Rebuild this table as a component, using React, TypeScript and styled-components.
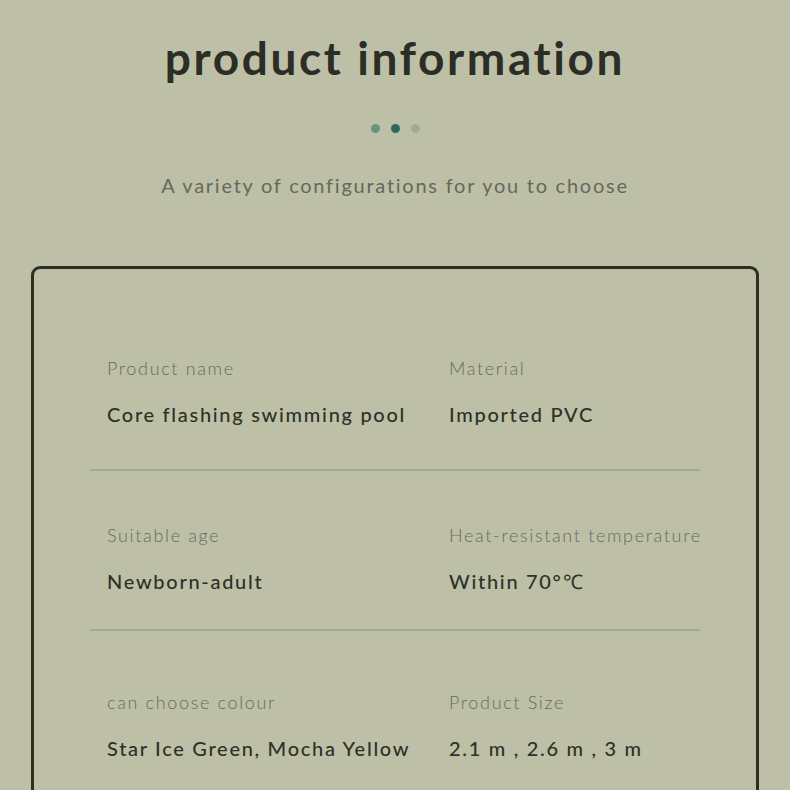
import React from "react";
import styled, { createGlobalStyle } from "styled-components";

const Global = createGlobalStyle`
  html, body { margin: 0; padding: 0; background: #bdc0a7; }
  body { font-family: Lato, "Open Sans", sans-serif; }
`;

const Page = styled.div`
  width: 790px;
  height: 790px;
  overflow: hidden;
  background: #bdc0a7;
  display: flex;
  flex-direction: column;
  align-items: center;
`;

const Title = styled.h1`
  margin: 30px 0 0;
  font-family: Lato, sans-serif;
  font-weight: 700;
  font-size: 46px;
  line-height: 56px;
  letter-spacing: 2.6px;
  color: #2c2d24;
`;

const Dots = styled.div`
  display: flex;
  gap: 11px;
  margin-top: 38px;
`;

const Dot = styled.span<{ $c: string }>`
  width: 9px;
  height: 9px;
  border-radius: 50%;
  background: ${(p) => p.$c};
`;

const Subtitle = styled.p`
  margin: 38px 0 0;
  font-family: Lato, sans-serif;
  font-weight: 400;
  font-size: 20px;
  line-height: 28px;
  letter-spacing: 1.75px;
  color: #65695a;
`;

const Card = styled.section`
  align-self: flex-start;
  margin: 67px 0 0 31px;
  width: 728px;
  box-sizing: border-box;
  border: 3px solid #2e2f22;
  border-bottom: none;
  border-radius: 9px 9px 0 0;
  padding: 87px 56px 0;
  flex: 1;
`;

const Row = styled.div<{ $below: number; $last?: boolean }>`
  display: grid;
  grid-template-columns: 342px 1fr;
  padding: 0 0 ${(p) => (p.$last ? 0 : p.$below)}px 17px;
  border-bottom: ${(p) => (p.$last ? "none" : "2px solid #a5a896")};
  margin-bottom: ${(p) => (p.$last ? 0 : 94 - p.$below)}px;
`;

const Cell = styled.div`
  display: flex;
  flex-direction: column;
  gap: 21px;
`;

const Label = styled.span`
  font-family: Lato, sans-serif;
  font-weight: 300;
  font-size: 18px;
  line-height: 24px;
  letter-spacing: 1.65px;
  color: #686a5c;
  white-space: nowrap;
`;

const Value = styled.span`
  font-family: Lato, sans-serif;
  font-weight: 500;
  font-size: 20px;
  line-height: 26px;
  letter-spacing: 1.7px;
  color: #2e3126;
  white-space: nowrap;
`;

const rows: { below: number; cells: [string, string][] }[] = [
  {
    below: 42,
    cells: [
      ["Product name", "Core flashing swimming pool"],
      ["Material", "Imported PVC"],
    ],
  },
  {
    below: 35,
    cells: [
      ["Suitable age", "Newborn-adult"],
      ["Heat-resistant temperature", "Within 70°℃"],
    ],
  },
  {
    below: 0,
    cells: [
      ["can choose colour", "Star Ice Green, Mocha Yellow"],
      ["Product Size", "2.1 m , 2.6 m , 3 m"],
    ],
  },
];

export default function App() {
  return (
    <Page>
      <Global />
      <Title>product information</Title>
      <Dots>
        <Dot $c="#6a927e" />
        <Dot $c="#2e6858" />
        <Dot $c="#a2aa99" />
      </Dots>
      <Subtitle>A variety of configurations for you to choose</Subtitle>
      <Card>
        {rows.map((r, i) => (
          <Row key={i} $below={r.below} $last={i === rows.length - 1}>
            {r.cells.map(([l, v]) => (
              <Cell key={l}>
                <Label>{l}</Label>
                <Value>{v}</Value>
              </Cell>
            ))}
          </Row>
        ))}
      </Card>
    </Page>
  );
}
